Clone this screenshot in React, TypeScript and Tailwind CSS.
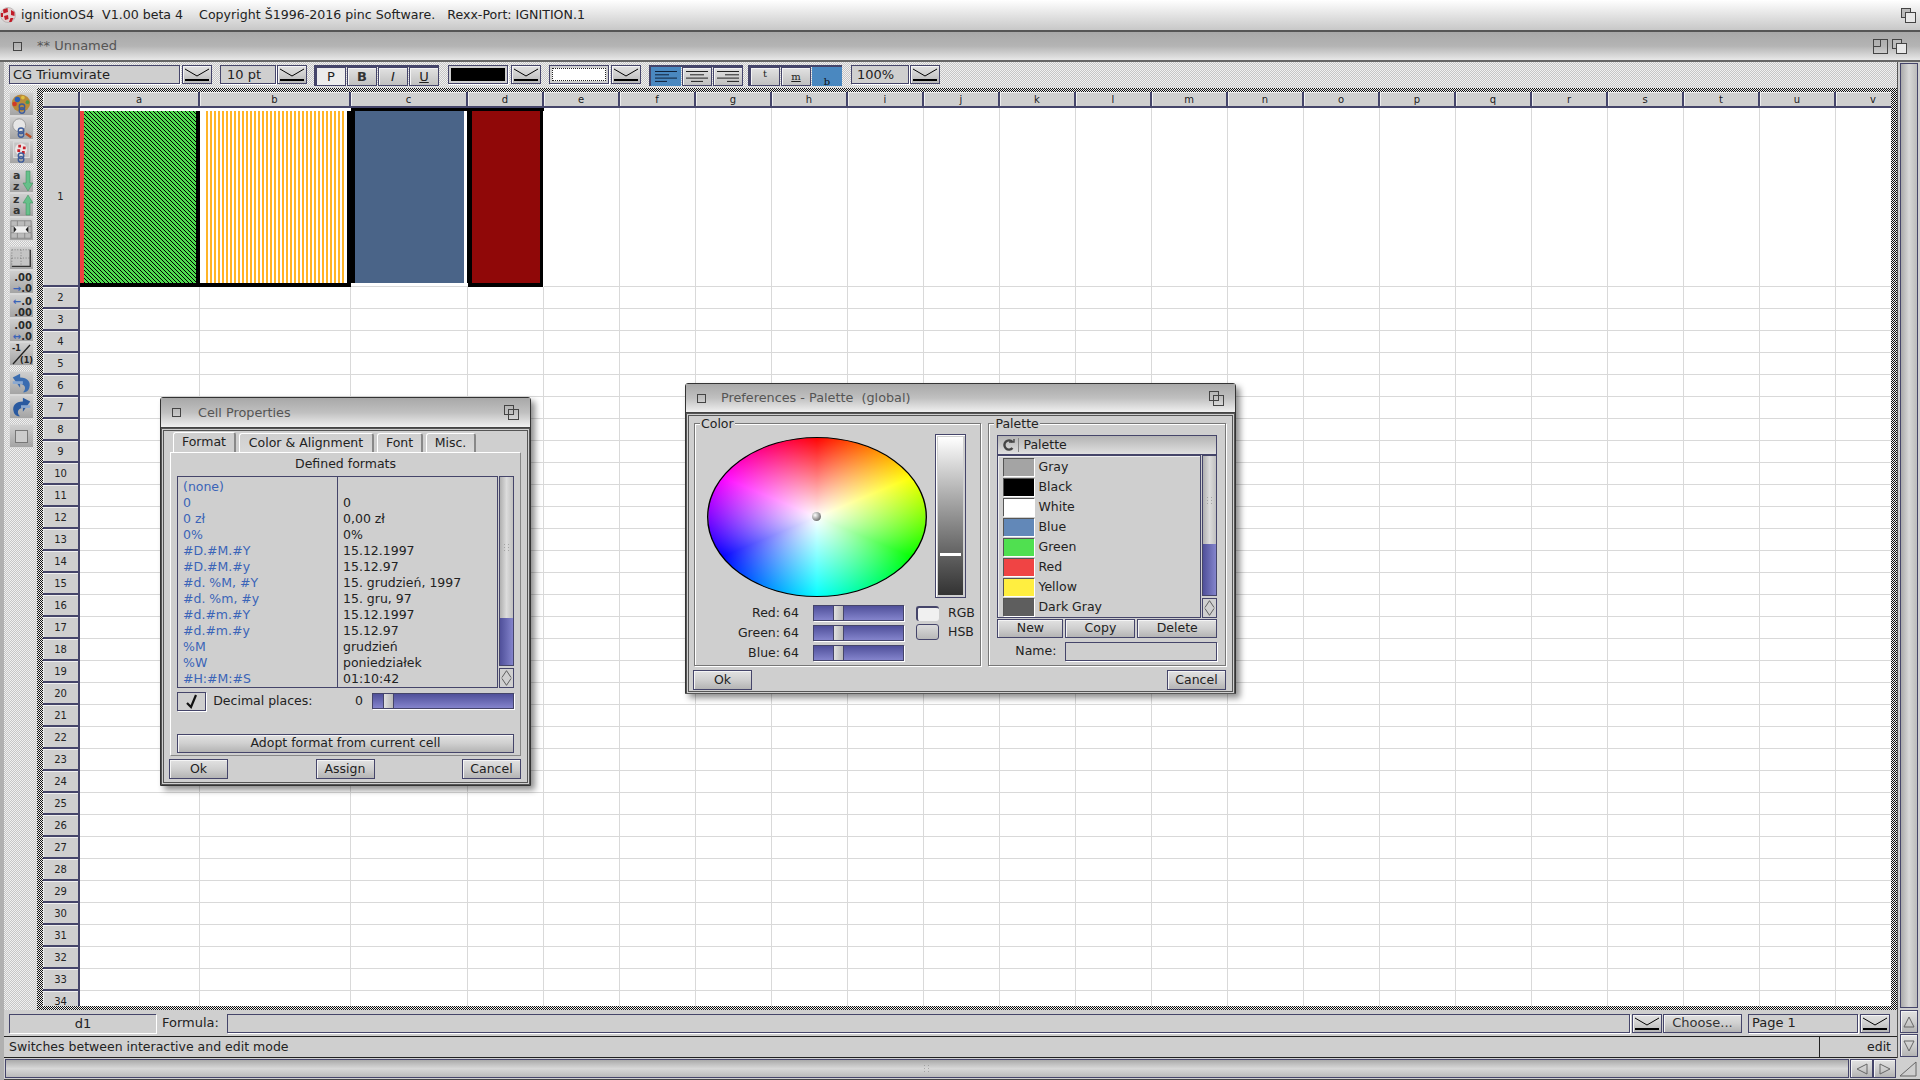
import React from "react";

const B = "border border-[#45456a]";
const btn = "flex items-center justify-center border border-[#45456a] bg-linear-to-b from-[#e2e2e2] via-[#cfcfcf] to-[#b4b4b4] shadow-[inset_1px_1px_0_#f4f4f4] text-[#222]";
const field = "flex items-center border border-[#45456a] bg-[#cfcfcf] shadow-[1px_1px_0_#fff]";
const darkDither = "bg-[image:repeating-conic-gradient(#111_0_25%,#eee_0_50%)] bg-[length:2px_2px]";
const lightDither = "bg-[image:repeating-conic-gradient(#c6c6c6_0_25%,#f0f0f0_0_50%)] bg-[length:2px_2px]";

function Popup({ w = 30, h = 19 }: { w?: number; h?: number }) {
  return (
    <div className={btn + " shrink-0"} style={{ width: w, height: h }}>
      <svg width={w - 4} height={h - 4} viewBox="0 0 26 15" fill="none" stroke="#000">
        <path d="M1 2 L13 9 L25 2" strokeWidth="1" />
        <path d="M1 13 H25" strokeWidth="2" />
      </svg>
    </div>
  );
}

function Depth({ soft = false }: { soft?: boolean }) {
  return (
    <svg width="15" height="15" viewBox="0 0 15 15" fill="none" stroke="#444" strokeWidth="1">
      <rect x="0.5" y="0.5" width="9" height="9" fill={soft ? "#bbb" : "none"} />
      <rect x="4.5" y="4.5" width="10" height="10" fill={soft ? "#e8e8e8" : "none"} />
    </svg>
  );
}

function CloseBox() {
  return <div className="w-[9px] h-[9px] border border-[#444] shrink-0" />;
}

function Boing({ size = 16 }: { size?: number }) {
  return (
    <svg width={size} height={size} viewBox="0 0 16 16">
      <circle cx="8" cy="8" r="7.5" fill="#e2d2d2" stroke="#999" strokeWidth="0.5" />
      <path d="M3 2.5 L7.5 1 L8 5 L3.5 6.5Z M11 3 L14.5 5 L14.5 9 L11 8Z M4 9 L8 8 L8.5 12 L5 13Z M10.5 11 L13.5 11 L11.5 15 L9 15Z M0.8 6 L3 6 L3 10 L1 10Z" fill="#c01c28" />
    </svg>
  );
}

function Ring({ x, y }: { x: number; y: number }) {
  return (
    <g fill="none" stroke="#3e5c9a" strokeWidth="1.5">
      <circle cx={x} cy={y} r="3" />
      <circle cx={x} cy={y + 4} r="3" />
    </g>
  );
}

function ToolIcon({ kind }: { kind: number }) {
  const common = { width: 25, height: 23, viewBox: "0 0 25 23" };
  switch (kind) {
    case 0:
      return (
        <svg {...common}>
          <ellipse cx="12" cy="10" rx="10" ry="9.5" fill="#b98a3a" />
          <circle cx="8" cy="6" r="3" fill="#2c60b8" />
          <circle cx="14" cy="4" r="2" fill="#e0c040" />
          <circle cx="5" cy="11" r="2.5" fill="#d03a2a" />
          <circle cx="19" cy="9" r="2" fill="#4a9a50" />
          <Ring x={13} y={14} />
        </svg>
      );
    case 1:
      return (
        <svg {...common}>
          <circle cx="10" cy="8" r="7" fill="#e6e6e6" stroke="#999" />
          <path d="M17 17 L23 21" stroke="#b8502a" strokeWidth="2.5" />
          <Ring x={12} y={14} />
        </svg>
      );
    case 2:
      return (
        <svg {...common}>
          <rect x="4" y="0" width="17" height="17" fill="#c4c4c4" stroke="#e0e0e0" />
          <circle cx="12" cy="8" r="6.5" fill="#ece6e6" />
          <path d="M9 3h3v3H9zM14 5h3v3h-3zM8 8h3v3H8zM13 10h3v3h-3z" fill="#c8202a" />
          <Ring x={12} y={15} />
        </svg>
      );
    case 3:
      return (
        <div className="relative w-[25px] h-[23px] font-bold text-[11px] leading-[11px] text-[#333] pl-[3px]">
          <div>a</div>
          <div>z</div>
          <svg className="absolute left-[12px] top-0" width="12" height="23" viewBox="0 0 12 23">
            <path d="M4 1h4v12h3l-5 8-5-8h3z" fill="#66c08a" stroke="#3e8a5a" strokeWidth="0.5" />
          </svg>
        </div>
      );
    case 4:
      return (
        <div className="relative w-[25px] h-[23px] font-bold text-[11px] leading-[11px] text-[#333] pl-[3px]">
          <div>z</div>
          <div>a</div>
          <svg className="absolute left-[12px] top-0" width="12" height="23" viewBox="0 0 12 23">
            <path d="M6 1l5 8h-3v12h-4v-12h-3z" fill="#66c08a" stroke="#3e8a5a" strokeWidth="0.5" />
          </svg>
        </div>
      );
    case 5:
      return (
        <svg {...common}>
          <path d="M1 2h22v19H1zM8 2v19M16 2v19M1 8h22M1 15h22" fill="#bbb" stroke="#888" />
          <rect x="4" y="8" width="16" height="7" fill="#eee" />
          <path d="M4 8v7l3-3.5zM20 8v7l-3-3.5z" fill="#222" />
        </svg>
      );
    case 6:
      return (
        <svg {...common}>
          <rect x="2" y="2" width="20" height="18" fill="#c4c4c4" />
          <path d="M2 2h20M2 2v18M2 11h20M12 2v18" stroke="#777" strokeDasharray="1 2" fill="none" />
          <path d="M22 2v18H2" stroke="#333" strokeWidth="1.5" fill="none" />
        </svg>
      );
    case 7:
      return (
        <div className="w-[25px] h-[23px] text-right font-bold text-[10px] leading-[11px] text-[#2a2a2a] pr-[1px] pt-[1px]">
          <div>.00</div>
          <div><span className="text-[#3a64b8]">→</span>.0</div>
        </div>
      );
    case 8:
      return (
        <div className="w-[25px] h-[23px] text-right font-bold text-[10px] leading-[11px] text-[#2a2a2a] pr-[1px] pt-[1px]">
          <div><span className="text-[#3a64b8]">←</span>.0</div>
          <div>.00</div>
        </div>
      );
    case 9:
      return (
        <div className="w-[25px] h-[23px] text-right font-bold text-[10px] leading-[11px] text-[#2a2a2a] pr-[1px] pt-[1px]">
          <div>.00</div>
          <div><span className="text-[#3a64b8]">↔</span>.0</div>
        </div>
      );
    case 10:
      return (
        <div className="relative w-[25px] h-[23px] text-[#222] font-bold text-[8px] leading-[9px]">
          <div className="absolute left-[2px] top-[1px]">-1</div>
          <div className="absolute right-0 bottom-[1px]">(1)</div>
          <svg className="absolute inset-0" width="25" height="23" viewBox="0 0 25 23">
            <path d="M3 21 L20 2" stroke="#222" strokeWidth="1.3" />
          </svg>
        </div>
      );
    case 11:
      return (
        <svg {...common}>
          <path d="M3 5 L11 1 V5 C19 5 23 10 21 16 C20 20 17 21 14 21 C18 18 17 12 11 12 V16 Z" fill="#3a6cb0" />
          <rect x="3" y="9" width="11" height="3" fill="#8aa8d0" />
        </svg>
      );
    case 12:
      return (
        <svg {...common}>
          <path d="M22 5 L14 1 V5 C6 5 2 10 4 16 C5 20 8 21 11 21 C7 18 8 12 14 12 V16 Z" fill="#2a5aa0" />
          <rect x="12" y="9" width="10" height="3" fill="#8aa8d0" />
        </svg>
      );
    default:
      return <div className="w-[13px] h-[13px] border border-[#777] bg-[#ccc]" />;
  }
}

const toolGroups = [[0, 1, 2], [3, 4, 5], [6, 7, 8, 9, 10], [11, 12], [13]];

function ToolStrip() {
  return (
    <div className={lightDither + " w-[33px] shrink-0 pl-[5px] pt-[4px] flex flex-col gap-[5px]"}>
      {toolGroups.map((g, i) => (
        <div key={i} className="flex flex-col">
          {g.map((k) => (
            <div key={k} className="w-[25px] h-[24px] flex items-center justify-center bg-linear-to-b from-[#cfcfcf] to-[#a4a4a4] border border-[#d8d8d8] overflow-hidden">
              <ToolIcon kind={k} />
            </div>
          ))}
        </div>
      ))}
    </div>
  );
}

function Seg({ w, active, children }: { w: number; active?: boolean; children?: React.ReactNode }) {
  return (
    <div
      className={
        active
          ? "h-[19px] flex items-center justify-center bg-[#4a88c0] text-[#111]"
          : "h-[19px] flex items-center justify-center border border-[#45456a] bg-linear-to-b from-[#e2e2e2] to-[#c0c0c0] shadow-[inset_1px_1px_0_#f4f4f4] text-[#222]"
      }
      style={{ width: w }}
    >
      {children}
    </div>
  );
}

function AlignIcon({ mode }: { mode: "l" | "c" | "r" }) {
  const lines = [22, 14, 22, 12];
  return (
    <svg width="24" height="15" viewBox="0 0 24 15" stroke={mode === "l" ? "#10223a" : "#222"}>
      {lines.map((w, i) => {
        const x = mode === "l" ? 1 : mode === "c" ? 12 - w / 2 : 23 - w;
        return <path key={i} d={`M${x} ${2.5 + i * 3.3} h${w}`} />;
      })}
    </svg>
  );
}

function Toolbar() {
  return (
    <div className={lightDither + " h-[26px] shrink-0 flex items-start pt-[3px] pl-[5px] text-[13px] text-[#222]"}>
      <div className={field + " w-[171px] h-[19px] pl-[3px]"}>CG Triumvirate</div>
      <div className="ml-[2px]"><Popup /></div>
      <div className={field + " ml-[8px] w-[56px] h-[19px] pl-[6px]"}>10 pt</div>
      <div className="ml-[1px]"><Popup /></div>
      <div className="ml-[7px] flex gap-[1px] border-t-2 border-l-2 border-[#45456a]">
        <Seg w={30}><div className="w-full h-full flex items-center justify-center bg-[#ececec]">P</div></Seg>
        <Seg w={30}><span className="font-bold text-[#333]">B</span></Seg>
        <Seg w={30}><span className="italic">I</span></Seg>
        <Seg w={30}><span className="underline">U</span></Seg>
      </div>
      <div className={field + " ml-[9px] w-[60px] h-[19px] p-[2px]"}>
        <div className="w-full h-full bg-black" />
      </div>
      <div className="ml-[3px]"><Popup /></div>
      <div className={field + " ml-[8px] w-[60px] h-[19px] p-[2px]"}>
        <div className="w-full h-full bg-white border border-dotted border-[#222]" />
      </div>
      <div className="ml-[2px]"><Popup /></div>
      <div className="ml-[8px] flex gap-[1px] border-t-2 border-l-2 border-[#45456a]">
        <Seg w={30} active><AlignIcon mode="l" /></Seg>
        <Seg w={30}><AlignIcon mode="c" /></Seg>
        <Seg w={30}><AlignIcon mode="r" /></Seg>
      </div>
      <div className="ml-[5px] flex gap-[1px] font-['DejaVu_Serif',serif] text-[10px] border-t-2 border-l-2 border-[#45456a]">
        <Seg w={30}><span className="-translate-y-[3px]">t</span></Seg>
        <Seg w={30}><span className="underline">m</span></Seg>
        <Seg w={30} active><span className="translate-y-[5px]">b</span></Seg>
      </div>
      <div className={field + " ml-[9px] w-[58px] h-[19px] pl-[5px]"}>100%</div>
      <div className="ml-[1px]"><Popup /></div>
    </div>
  );
}

const colLabels = "abcdefghijklmnopqrstuv".split("");
const rows = Array.from({ length: 33 }, (_, i) => i + 2);
const hdr = "bg-[#cfcfcf] border-r-2 border-b-2 border-[#45456a] shadow-[inset_1px_1px_0_#eee] flex items-center justify-center text-[10px] text-[#222]";
const gridCell = "border-r border-b border-[#d9d9d9]";

function Row1() {
  return (
    <>
      <div className={hdr}>1</div>
      <div className="flex flex-col bg-white">
        <div className="h-[3px]" />
        <div className="flex-1 flex">
          <div className="w-[4px] bg-[#f04040]" />
          <div className="flex-1 bg-[image:repeating-linear-gradient(45deg,#000_0_1.1px,#50dc50_1.1px_2.83px)]" />
          <div className="w-[4px] bg-black" />
        </div>
        <div className="h-[4px] bg-black" />
      </div>
      <div className="flex flex-col bg-white">
        <div className="h-[3px]" />
        <div className="flex-1 flex">
          <div className="w-[6px]" />
          <div className="flex-1 bg-[image:repeating-linear-gradient(90deg,#ffb428_0_2px,#fff_2px_4px)]" />
          <div className="w-[1px]" />
          <div className="w-[4px] bg-black" />
        </div>
        <div className="h-[4px] bg-black" />
      </div>
      <div className="flex flex-col bg-white border-b border-[#d9d9d9]">
        <div className="h-[3px] bg-black" />
        <div className="flex-1 flex">
          <div className="w-[4px] bg-black" />
          <div className="w-[109px] bg-[#4a6488]" />
          <div className="flex-1" />
          <div className="w-[1px] bg-black" />
        </div>
        <div className="h-[3px]" />
      </div>
      <div className="flex flex-col bg-white">
        <div className="h-[3px] bg-black" />
        <div className="flex-1 flex">
          <div className="w-[4px] bg-black" />
          <div className="w-[68px] bg-[#900808]" />
          <div className="w-[3px] bg-black" />
        </div>
        <div className="h-[4px] w-[75px] bg-black" />
      </div>
      {colLabels.slice(4).map((c) => (
        <div key={c} className={gridCell} />
      ))}
    </>
  );
}

function Grid() {
  return (
    <div className={darkDither + " flex-1 min-w-0 min-h-0 pt-[4px] pl-[6px] pr-[6px] pb-[4px] flex"}>
      <div className="flex-1 min-w-0 min-h-0 overflow-hidden bg-white font-['DejaVu_Sans',sans-serif]">
        <div className="grid grid-cols-[37px_120px_151px_117px_76px_repeat(18,76px)] grid-rows-[16px_179px_repeat(33,22px)] w-max">
          <div className={hdr} />
          {colLabels.map((c) => (
            <div key={c} className={hdr}>{c}</div>
          ))}
          <Row1 />
          {rows.map((r) => (
            <React.Fragment key={r}>
              <div className={hdr}>{r}</div>
              {colLabels.map((c) => (
                <div key={c} className={gridCell} />
              ))}
            </React.Fragment>
          ))}
        </div>
      </div>
    </div>
  );
}

function Arrow({ d, size = 14 }: { d: string; size?: number }) {
  return (
    <svg width={size} height={size} viewBox="0 0 14 14" fill="none" stroke="#666">
      <path d={d} />
    </svg>
  );
}

function WinTitle({ children, h, gap }: { children: React.ReactNode; h: number; gap: number }) {
  return (
    <div className="shrink-0 flex items-center pl-[11px] pr-[11px] border-b border-[#444] bg-linear-to-b from-[#a8a8a8] via-[#c0c0c0] to-[#f0f0f0] text-[12.8px] text-[#555]" style={{ height: h }}>
      <CloseBox />
      <span className="flex-1 whitespace-pre" style={{ marginLeft: gap }}>{children}</span>
      <Depth />
    </div>
  );
}

function Knobs() {
  return (
    <div className="grid grid-cols-2 gap-[2px] w-[6px] opacity-60">
      {[0, 1, 2, 3, 4, 5].map((i) => (
        <div key={i} className="w-[1px] h-[1px] bg-[#888]" />
      ))}
    </div>
  );
}

function VScroll({ w, h, knob }: { w: number; h: number; knob: number }) {
  return (
    <div className="flex flex-col shrink-0" style={{ width: w, height: h }}>
      <div className="flex-1 flex flex-col border border-[#45456a]">
        <div className="flex items-center justify-center bg-linear-to-r from-[#b0b0b0] via-[#dcdcdc] to-[#c0c0c0]" style={{ height: knob }}>
          <Knobs />
        </div>
        <div className="flex-1 bg-linear-to-r from-[#50509a] to-[#8484cc]" />
      </div>
      <div className={B + " mt-[2px] h-[20px] flex flex-col items-center justify-center bg-[#d0d0d0]"}>
        <svg width={w - 4} height="18" viewBox="0 0 12 18" fill="none" stroke="#555">
          <path d="M1 8.5 L6 1 L11 8.5 M1 9.5 L6 17 L11 9.5" />
        </svg>
      </div>
    </div>
  );
}

function Slider({ w, knobX }: { w: number; knobX: number }) {
  return (
    <div className="relative border border-[#45456a] bg-linear-to-b from-[#50509a] to-[#8484cc] h-[16px] shadow-[1px_1px_0_#fff]" style={{ width: w }}>
      <div className="absolute top-[-1px] w-[11px] h-[16px] border border-[#45456a] bg-linear-to-r from-[#e0e0e0] to-[#b8b8b8]" style={{ left: knobX }} />
    </div>
  );
}

const formats: [string, string][] = [
  ["(none)", ""],
  ["0", "0"],
  ["0 zł", "0,00 zł"],
  ["0%", "0%"],
  ["#D.#M.#Y", "15.12.1997"],
  ["#D.#M.#y", "15.12.97"],
  ["#d. %M, #Y", "15. grudzień, 1997"],
  ["#d. %m, #y", "15. gru, 97"],
  ["#d.#m.#Y", "15.12.1997"],
  ["#d.#m.#y", "15.12.97"],
  ["%M", "grudzień"],
  ["%W", "poniedziałek"],
  ["#H:#M:#S", "01:10:42"],
];

const dialog = "absolute flex flex-col bg-[#cfcfcf] border border-[#333] rounded-t-[3px] shadow-[4px_4px_6px_rgba(0,0,0,0.45)] text-[12.5px] text-[#222]";

function Tab({ w, active, children }: { w: number; active?: boolean; children: React.ReactNode }) {
  return (
    <div
      className={
        "flex items-center justify-center rounded-t-[3px] border-t border-l border-white border-r-2 border-r-[#888] " +
        (active ? "h-[20px] -mt-[1px] bg-[#cfcfcf]" : "h-[19px] bg-linear-to-b from-[#cfcfcf] to-[#d8d8d8]")
      }
      style={{ width: w }}
    >
      {children}
    </div>
  );
}

function CellProperties() {
  return (
    <div className={dialog + " left-[160px] top-[397px] w-[371px] h-[389px]"}>
      <WinTitle h={30} gap={17}>Cell Properties</WinTitle>
      <div className="flex-1 flex flex-col border-[3px] border-double border-[#555] px-[6px] pb-[3px]">
        <div className="flex gap-[3px] pl-[3px] pt-[2px] h-[21px] shrink-0">
          <Tab w={63} active>Format</Tab>
          <Tab w={135}>Color &amp; Alignment</Tab>
          <Tab w={46}>Font</Tab>
          <Tab w={50}>Misc.</Tab>
        </div>
        <div className="flex-1 flex flex-col border border-white border-r-[#888] border-b-[#888] px-[6px]">
          <div className="h-[23px] flex items-center justify-center shrink-0">Defined formats</div>
          <div className="flex h-[212px] shrink-0 gap-[1px]">
            <div className="flex-1 border border-[#45456a] flex pt-[2px] relative">
              <div className="absolute left-[159px] top-0 bottom-0 w-[1px] bg-[#45456a]" />
              <div className="w-[159px] shrink-0 pl-[5px] text-[#3a64b8]">
                {formats.map((f) => (
                  <div key={f[0]} className="h-[16px] leading-[16px] whitespace-pre">{f[0]}</div>
                ))}
              </div>
              <div className="pl-[6px] text-[#222]">
                {formats.map((f) => (
                  <div key={f[0]} className="h-[16px] leading-[16px] whitespace-pre">{f[1]}</div>
                ))}
              </div>
            </div>
            <VScroll w={15} h={212} knob={141} />
          </div>
          <div className="flex items-center h-[19px] mt-[4px] shrink-0">
            <div className={field + " w-[30px] h-[19px] justify-center"}>
              <svg width="16" height="15" viewBox="0 0 16 15" fill="none" stroke="#111" strokeWidth="2.2">
                <path d="M3 9 L7 13 L12 1" />
              </svg>
            </div>
            <span className="ml-[7px] w-[140px]">Decimal places:</span>
            <span className="text-right w-[14px]">0</span>
            <div className="ml-[9px] -mt-[2px]"><Slider w={142} knobX={10} /></div>
          </div>
          <div className={btn + " h-[19px] mt-[23px] shrink-0"}>Adopt format from current cell</div>
        </div>
        <div className="flex justify-between h-[20px] mt-[3px] shrink-0">
          <div className={btn + " w-[59px] -ml-[1px]"}>Ok</div>
          <div className={btn + " w-[59px]"}>Assign</div>
          <div className={btn + " w-[59px]"}>Cancel</div>
        </div>
      </div>
    </div>
  );
}

const palette: [string, string][] = [
  ["Gray", "#a4a4a4"],
  ["Black", "#000000"],
  ["White", "#ffffff"],
  ["Blue", "#6288b8"],
  ["Green", "#50e050"],
  ["Red", "#f04444"],
  ["Yellow", "#ffee40"],
  ["Dark Gray", "#5e5e5e"],
];

function GroupBox({ label, className, children }: { label: string; className: string; children: React.ReactNode }) {
  return (
    <div className={"relative border border-[#777] shadow-[1px_1px_0_#fff,inset_1px_1px_0_#fff] " + className}>
      <span className="absolute left-[5px] -top-[8px] bg-[#cfcfcf] px-[1px] leading-[16px]">{label}</span>
      {children}
    </div>
  );
}

function RgbRow({ label }: { label: string }) {
  return (
    <div className="flex items-center h-[20px]">
      <span className="w-[85px] text-right">{label}:</span>
      <span className="ml-[3px] w-[30px]">64</span>
      <Slider w={91} knobX={19} />
    </div>
  );
}

function Preferences() {
  return (
    <div className={dialog + " left-[685px] top-[383px] w-[551px] h-[311px]"}>
      <WinTitle h={29} gap={15}>{"Preferences - Palette  (global)"}</WinTitle>
      <div className="flex-1 flex flex-col border-[3px] border-double border-[#555] pl-[5px] pr-[6px] pb-[1px]">
        <div className="flex gap-[7px] mt-[7px] h-[243px] shrink-0">
          <GroupBox label="Color" className="w-[288px] h-full flex flex-col pl-[12px] pt-[10px]">
            <div className="flex h-[164px] shrink-0">
              <div className="w-[228px] h-[160px] mt-[3px] shrink-0 relative">
                <div className="w-[160px] h-[160px] rounded-full origin-top-left scale-x-[1.375] border border-black bg-[image:radial-gradient(circle,#ffffff_0%,rgba(255,255,255,0)_72%),conic-gradient(#f00,#ff0,#0f0,#0ff,#00f,#f0f,#f00)]" />
                <div className="absolute left-[105px] top-[75px] w-[9px] h-[9px] rounded-full bg-[radial-gradient(circle_at_35%_35%,#fff,#777_70%,#444)]" />
              </div>
              <div className="w-[31px] h-[164px] border border-[#45456a] p-[2px] shadow-[inset_1px_1px_0_#fff] shrink-0">
                <div className="h-full flex flex-col bg-linear-to-b from-[#fff] to-[#333] relative">
                  <div className="absolute left-[2px] right-[2px] top-[116px] h-[3px] bg-white" />
                </div>
              </div>
            </div>
            <div className="flex mt-[5px]">
              <div className="w-[214px] -ml-[12px] flex flex-col">
                <RgbRow label="Red" />
                <RgbRow label="Green" />
                <RgbRow label="Blue" />
              </div>
              <div className="ml-[7px] flex flex-col gap-[3px] pt-[3px]">
                <div className="flex items-center gap-[9px] h-[15px]">
                  <div className="w-[23px] h-[15px] rounded-[3px] border-t-2 border-l-2 border-[#45456a] bg-[#f0f0f0]" />
                  <span>RGB</span>
                </div>
                <div className="flex items-center gap-[9px] h-[16px]">
                  <div className="w-[23px] h-[16px] rounded-[3px] border border-[#45456a] bg-linear-to-b from-[#dcdcdc] to-[#b8b8b8]" />
                  <span>HSB</span>
                </div>
              </div>
            </div>
          </GroupBox>
          <GroupBox label="Palette" className="w-[238px] h-full pl-[8px] pr-[8px] pt-[11px] flex flex-col">
            <div className="h-[20px] shrink-0 flex items-center border border-[#45456a] bg-linear-to-b from-[#b4b4b4] to-[#e0e0e0] pl-[4px]">
              <svg width="13" height="14" viewBox="0 0 13 14" fill="none" stroke="#444" strokeWidth="2.4">
                <path d="M10.5 4 A4.6 4.6 0 1 0 10.5 10" />
                <path d="M7 4 h5 v-3" strokeWidth="1.4" />
              </svg>
              <div className="ml-[3px] mr-[4px] w-[1px] h-[14px] bg-[#888]" />
              <span>Palette</span>
            </div>
            <div className="flex gap-[1px] h-[163px] shrink-0">
              <div className="flex-1 border border-[#45456a] shadow-[inset_1px_1px_0_#eee] pt-[1px] pl-[5px]">
                {palette.map(([n, c]) => (
                  <div key={n} className="h-[20px] flex items-center">
                    <div className="w-[31px] h-[18px] border-t border-l border-[#555] shadow-[1px_1px_0_#fff]" style={{ background: c }} />
                    <span className="ml-[4px]">{n}</span>
                  </div>
                ))}
              </div>
              <VScroll w={15} h={163} knob={88} />
            </div>
            <div className="flex gap-[2px] h-[19px] mt-[1px] shrink-0">
              <div className={btn + " w-[66px]"}>New</div>
              <div className={btn + " w-[70px]"}>Copy</div>
              <div className={btn + " flex-1"}>Delete</div>
            </div>
            <div className="flex items-center h-[19px] mt-[4px] shrink-0">
              <span className="w-[66px] text-right pr-[7px]">Name:</span>
              <div className={field + " flex-1 h-[19px] ml-[2px]"} />
            </div>
          </GroupBox>
        </div>
        <div className="flex justify-between h-[20px] mt-[4px] shrink-0">
          <div className={btn + " w-[59px] -ml-[1px]"}>Ok</div>
          <div className={btn + " w-[59px]"}>Cancel</div>
        </div>
      </div>
    </div>
  );
}

export default function App() {
  return (
    <div className="relative w-[1920px] h-[1080px] overflow-hidden flex flex-col bg-[#cfcfcf] font-['DejaVu_Sans',sans-serif] text-[13px] text-[#222]">
      {/* screen bar */}
      <div className="h-[32px] shrink-0 flex items-center border-b-2 border-[#555] bg-linear-to-b from-[#ffffff] to-[#c8c8c8] pr-[4px]">
        <Boing />
        <span className="ml-[5px] flex-1 whitespace-pre text-[#222] text-[12.6px]">{"ignitionOS4  V1.00 beta 4    Copyright Š1996-2016 pinc Software.   Rexx-Port: IGNITION.1"}</span>
        <Depth soft />
      </div>

      {/* window */}
      <div className="flex-1 min-h-0 flex flex-col border-l-[4px] border-[#b0b0b0]">
        {/* window title */}
        <div className="h-[30px] shrink-0 -ml-[4px] flex items-center pl-[13px] pr-[13px] border-b-2 border-[#666] bg-linear-to-b from-[#a8a8a8] via-[#b4b4b4] to-[#e8e8e8] text-[#555]">
          <CloseBox />
          <span className="ml-[15px] flex-1">** Unnamed</span>
          <svg width="15" height="15" viewBox="0 0 15 15" fill="none" stroke="#444">
            <rect x="0.5" y="0.5" width="14" height="14" />
            <path d="M0.5 7.5 H7.5 V0.5" />
          </svg>
          <div className="ml-[4px]"><Depth soft /></div>
        </div>

        <div className="flex-1 min-h-0 flex">
          {/* left side */}
          <div className="flex-1 min-w-0 flex flex-col">
            <Toolbar />
            <div className="flex-1 min-h-0 flex">
              <ToolStrip />
              <Grid />
            </div>
            {/* formula row */}
            <div className="h-[26px] shrink-0 flex items-center pl-[5px] pr-[7px] gap-[2px]">
              <div className="w-[147px] h-[19px] flex items-center justify-center border-t border-l border-[#45456a] shadow-[1px_1px_0_#fff]">d1</div>
              <span className="ml-[4px] w-[63px]">Formula:</span>
              <div className={field + " flex-1 h-[19px]"} />
              <Popup />
              <div className={btn + " w-[79px] h-[19px] text-[#333] ml-[-1px]"}>Choose...</div>
              <div className={field + " ml-[4px] w-[110px] h-[19px] pl-[3px]"}>Page 1</div>
              <Popup />
            </div>
            {/* status */}
            <div className="h-[22px] shrink-0 flex items-center border-t border-b border-[#222] pl-[5px] pr-[6px] text-[12.5px]">
              <span className="flex-1">Switches between interactive and edit mode</span>
              <div className="w-[1px] h-full bg-[#222]" />
              <span className="w-[71px] text-right">edit</span>
            </div>
          </div>

          {/* right scroll column */}
          <div className="w-[23px] shrink-0 pl-[2px] pr-[2px] pt-[1px] flex flex-col border-l border-[#555]">
            <div className="flex-1 border border-[#45456a] bg-linear-to-r from-[#aaa] via-[#d8d8d8] to-[#bbb]" />
            <div className={btn + " h-[23px] mt-[2px]"}><Arrow d="M2 12 L7 2 L12 12 Z" /></div>
            <div className={btn + " h-[23px] mt-[1px] mb-[1px]"}><Arrow d="M2 2 L7 12 L12 2 Z" /></div>
          </div>
        </div>

        {/* bottom scroll row */}
        <div className="h-[22px] shrink-0 flex items-center pl-[1px] border-b border-[#444]">
          <div className="w-[1844px] h-[19px] border border-[#45456a] bg-linear-to-b from-[#aaa] via-[#d8d8d8] to-[#bbb] flex items-center justify-center"><div className="flex gap-[2px]"><Knobs /></div></div>
          <div className={btn + " ml-[1px] w-[23px] h-[19px]"}><Arrow d="M12 2 L2 7 L12 12 Z" /></div>
          <div className={btn + " w-[23px] h-[19px]"}><Arrow d="M2 2 L12 7 L2 12 Z" /></div>
          <div className="ml-[3px]"><svg width="18" height="16" viewBox="0 0 18 16" fill="none" stroke="#666"><path d="M1 15 L17 1 V15 Z" /></svg></div>
        </div>
      </div>

      <CellProperties />
      <Preferences />
    </div>
  );
}
